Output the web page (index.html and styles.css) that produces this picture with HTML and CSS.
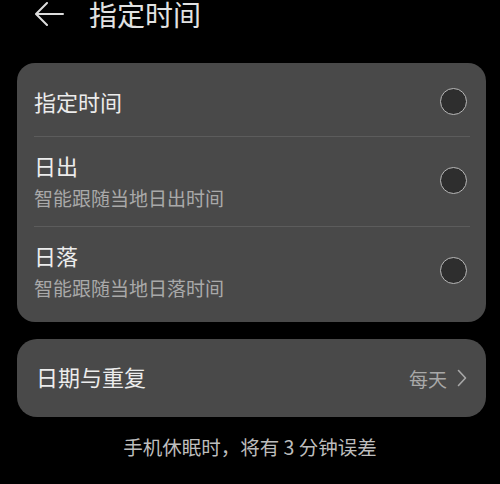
FILE: index.html
```html
<!DOCTYPE html>
<html lang="zh">
<head>
  <meta charset="UTF-8">
  <meta name="viewport" content="width=device-width, initial-scale=1.0">
  <title>指定时间</title>
  <link rel="stylesheet" href="styles.css">
</head>
<body>
  <div class="header">
    <svg class="back" width="30" height="24" viewBox="0 0 30 24">
      <path d="M28 12 H2 M12 1 L1 12 L12 23" fill="none" stroke="#dcdcdc" stroke-width="2" stroke-linecap="round" stroke-linejoin="round"/>
    </svg>
    <h1>指定时间</h1>
  </div>

  <div class="card">
    <div class="row row-first">
      <div class="text">
        <div class="title">指定时间</div>
      </div>
      <span class="radio"></span>
    </div>
    <div class="row">
      <div class="text">
        <div class="title">日出</div>
        <div class="sub">智能跟随当地日出时间</div>
      </div>
      <span class="radio"></span>
    </div>
    <div class="row row-last">
      <div class="text">
        <div class="title">日落</div>
        <div class="sub">智能跟随当地日落时间</div>
      </div>
      <span class="radio"></span>
    </div>
  </div>

  <div class="card card-repeat">
    <div class="title">日期与重复</div>
    <div class="value">
      每天
      <svg width="10" height="18" viewBox="0 0 10 18">
        <path d="M1.5 1.5 L8.5 9 L1.5 16.5" fill="none" stroke="#a8a8a8" stroke-width="1.6" stroke-linecap="round" stroke-linejoin="round"/>
      </svg>
    </div>
  </div>

  <p class="note">手机休眠时，将有 3 分钟误差</p>
</body>
</html>
```

FILE: styles.css
```css
body {
  font-family: 'Noto Sans CJK SC', 'Noto Sans', sans-serif;
  background-color: #000;
  margin: 0;
  color: #e8e8e8;
}
.header {
  display: flex;
  align-items: center;
  height: 28px;
  padding-left: 35px;
  margin-bottom: 35px;
}
.header h1 {
  margin: 0 0 0 24px;
  font-size: 28px;
  font-weight: 400;
  line-height: 28px;
  color: #e2e2e2;
}
.card {
  background-color: #494949;
  border-radius: 18px;
  margin: 0 14px 0 17px;
  padding-bottom: 6px;
}
.row {
  display: flex;
  align-items: center;
  justify-content: space-between;
  margin: 0 16px 0 17px;
  padding: 14px 3px 16px 0;
  border-bottom: 1px solid #5c5c5c;
}
.row-first {
  padding: 24px 3px 21px 0;
}
.row-last {
  border-bottom: none;
}
.title {
  font-size: 22px;
  line-height: 28px;
  color: #ececec;
}
.sub {
  margin-top: 7px;
  font-size: 19px;
  line-height: 24px;
  color: #a9a9a9;
}
.radio {
  width: 25px;
  height: 25px;
  border-radius: 50%;
  border: 1.5px solid #b8b8b8;
  background-color: #2e2e2e;
}
.card-repeat {
  display: flex;
  align-items: center;
  justify-content: space-between;
  margin-top: 17px;
  height: 78px;
  padding: 0 19px 0 19px;
  border-radius: 20px;
}
.card-repeat .title {
  margin-top: -4px;
}
.value {
  display: flex;
  align-items: center;
  gap: 10px;
  font-size: 19px;
  color: #a8a8a8;
}
.note {
  margin: 17px 0 0;
  text-align: center;
  font-size: 19.5px;
  line-height: 26px;
  color: #bdbdbd;
}
```
